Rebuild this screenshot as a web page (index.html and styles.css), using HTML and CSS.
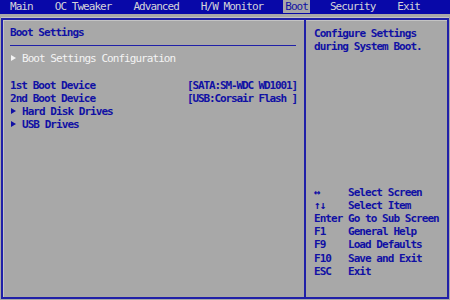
FILE: index.html
```html
<!DOCTYPE html>
<html lang="en">
<head>
<meta charset="UTF-8">
<title>BIOS Setup - Boot</title>
<link rel="stylesheet" href="styles.css">
</head>
<body>
<div class="menubar">
    <span class="tab">Main</span>
    <span class="tab">OC Tweaker</span>
    <span class="tab">Advanced</span>
    <span class="tab">H/W Monitor</span>
    <span class="tab active">Boot</span>
    <span class="tab">Security</span>
    <span class="tab">Exit</span>
</div>

<div class="frame">
    <div class="main-panel">
        <div class="panel-title">Boot Settings</div>
        <div class="rule"></div>
        <div class="item submenu selected"><span class="arrow"></span>Boot Settings Configuration</div>
        <div class="spacer"></div>
        <div class="option"><span>1st Boot Device</span><span class="value">[SATA:SM-WDC WD1001]</span></div>
        <div class="option"><span>2nd Boot Device</span><span class="value">[USB:Corsair Flash ]</span></div>
        <div class="item submenu"><span class="arrow"></span>Hard Disk Drives</div>
        <div class="item submenu"><span class="arrow"></span>USB Drives</div>
    </div>
    <div class="help-panel">
        <div class="help-text">Configure Settings<br>during System Boot.</div>
        <div class="keys">
            <span>&#8596;</span><span>Select Screen</span>
            <span>&#8593;&#8595;</span><span>Select Item</span>
            <span>Enter</span><span>Go to Sub Screen</span>
            <span>F1</span><span>General Help</span>
            <span>F9</span><span>Load Defaults</span>
            <span>F10</span><span>Save and Exit</span>
            <span>ESC</span><span>Exit</span>
        </div>
    </div>
</div>
</body>
</html>
```

FILE: styles.css
```css
body {
    margin: 0;
    padding: 0;
    background-color: #a8a8a8;
    font-family: "DejaVu Sans Mono", "Liberation Mono", monospace;
    font-size: 11px;
    font-weight: bold;
    letter-spacing: -0.95px;
    color: #1010a4;
    width: 450px;
    height: 300px;
    overflow: hidden;
    white-space: nowrap;
}
.menubar {
    background-color: #0808a8;
    color: #d4d4d8;
    height: 14px;
    line-height: 14px;
    display: flex;
    gap: 18px;
    padding-left: 8px;
    font-weight: normal;
}
.menubar .tab {
    padding: 0 2px;
}
.menubar .tab.active {
    background-color: #a8a8a8;
    color: #1010a4;
    height: 13px;
    line-height: 13px;
}
.frame {
    margin: 4px 1px 0 1px;
    height: 281px;
    box-sizing: border-box;
    border: 2px solid #2020a8;
    box-shadow: inset 1px 1px 0 #c4c4c4, 0 -1px 0 #c4c4c4;
    display: flex;
    line-height: 13.2px;
}
.main-panel {
    width: 303px;
    flex: none;
    padding: 6px 8px 0 7px;
    box-sizing: border-box;
    border-right: 2px solid #2020a8;
}
.rule {
    height: 1px;
    background-color: #2020a8;
    margin: 6px 0 6px 0;
}
.item {
    display: flex;
    align-items: center;
}
.item.selected {
    color: #f4f4f4;
    font-weight: normal;
}
.arrow {
    width: 12px;
    height: 13px;
    position: relative;
    flex: none;
}
.arrow::before {
    content: "";
    position: absolute;
    left: 1px;
    top: 3px;
    border-left: 5px solid currentColor;
    border-top: 3.5px solid transparent;
    border-bottom: 3.5px solid transparent;
}
.spacer {
    height: 13.2px;
}
.option {
    display: grid;
    grid-template-columns: 177px max-content;
}
.option .value {
    white-space: pre;
    letter-spacing: -1.12px;
}
.help-panel {
    flex: 1;
    padding: 7px 4px 19px 8px;
    display: flex;
    flex-direction: column;
    justify-content: space-between;
}
.keys {
    display: grid;
    grid-template-columns: 34px auto;
}
```
